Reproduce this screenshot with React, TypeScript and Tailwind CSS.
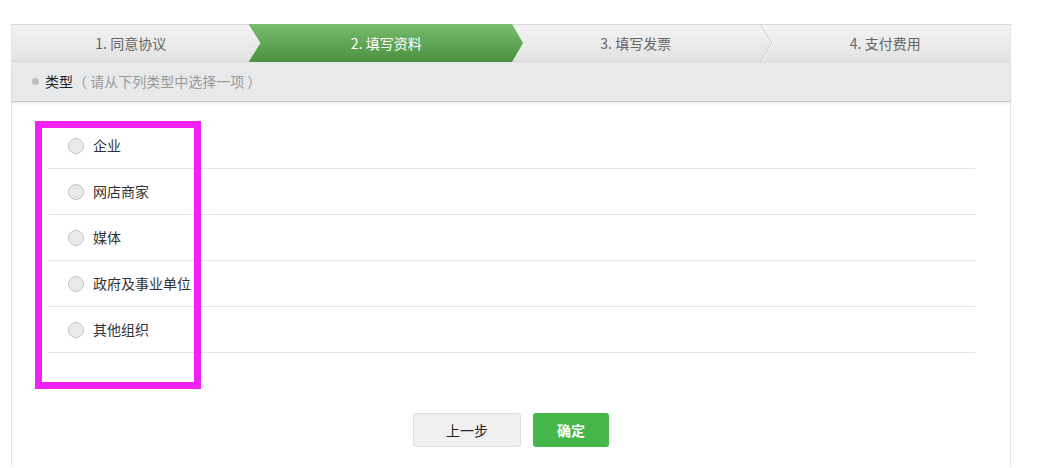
import React from 'react';

const steps = ['1. 同意协议', '2. 填写资料', '3. 填写发票', '4. 支付费用'];
const types = ['企业', '网店商家', '媒体', '政府及事业单位', '其他组织'];

const font = { fontFamily: '"Microsoft YaHei", "Noto Sans CJK SC", "Liberation Sans", sans-serif' };

export default function App() {
  const active = 1;

  return (
    <div className="relative bg-white pt-[24px]" style={font}>
      <div className="ml-[11px] w-[1000px] border-x border-[#e3e3e3]">
        {/* Step bar */}
        <div className="relative grid h-[38px] grid-cols-4 border-t border-b border-[#d6d6d6] bg-gradient-to-b from-[#f3f3f3] to-[#e3e3e3]">
          {steps.map((step, i) => (
            <div
              key={step}
              className={`relative flex items-center justify-center text-[14px] ${
                i === active ? 'text-white' : 'text-[#666]'
              } ${i === 0 ? 'pr-3' : ''}`}
            >
              {i === active && (
                <div className="absolute -top-px -bottom-px -left-[13px] -right-[12px] bg-gradient-to-b from-[#78bc6d] to-[#4b9141] [clip-path:polygon(0_0,calc(100%-11px)_0,100%_50%,calc(100%-11px)_100%,0_100%,12px_50%)]" />
              )}
              {i === 2 && (
                <svg
                  className="absolute -right-[13px] top-0 h-full w-[14px]"
                  viewBox="0 0 14 37"
                  preserveAspectRatio="none"
                >
                  <polyline points="2,0 13,18.5 2,37" fill="none" stroke="#ffffff" strokeWidth="1" />
                  <polyline points="1,0 12,18.5 1,37" fill="none" stroke="#c9c9c9" strokeWidth="1" />
                </svg>
              )}
              <span className="relative">{step}</span>
            </div>
          ))}
        </div>

        {/* Section header */}
        <div className="flex h-[40px] items-center border-b border-[#c6c6c6] bg-[#e8e9eb] pl-[20px] text-[14px] shadow-[0_2px_3px_rgba(0,0,0,0.08)]">
          <span className="mr-[6px] h-[7px] w-[7px] rounded-full bg-[#bdbdbd]" />
          <span className="text-[#222]">类型</span>
          <span className="text-[#999]">（ 请从下列类型中选择一项 ）</span>
        </div>

        {/* Options */}
        <div className="pl-[36px] pr-[35px] pt-[21px]">
          {types.map((t) => (
            <label
              key={t}
              className="flex h-[46px] items-center border-b border-[#e3e3e3] pl-[20px] text-[14px] text-[#333]"
            >
              <span className="mr-[9px] h-[16px] w-[16px] rounded-full border border-[#c4c4c4] bg-[#e9e9e9]" />
              {t}
            </label>
          ))}
        </div>

        {/* Actions */}
        <div className="flex justify-center gap-[12px] pt-[60px] pb-[20px]">
          <button className="h-[34px] w-[108px] rounded-[3px] border border-[#dedede] bg-[#f0f0f0] text-[14px] text-[#222]">
            上一步
          </button>
          <button className="h-[34px] w-[76px] rounded-[3px] bg-[#45b64a] text-[14px] font-bold text-white">
            确定
          </button>
        </div>
      </div>

      {/* Annotation highlight */}
      <div className="pointer-events-none absolute left-[35px] top-[121px] h-[268px] w-[166px] border-[7px] border-[#f122f1]" />
    </div>
  );
}
